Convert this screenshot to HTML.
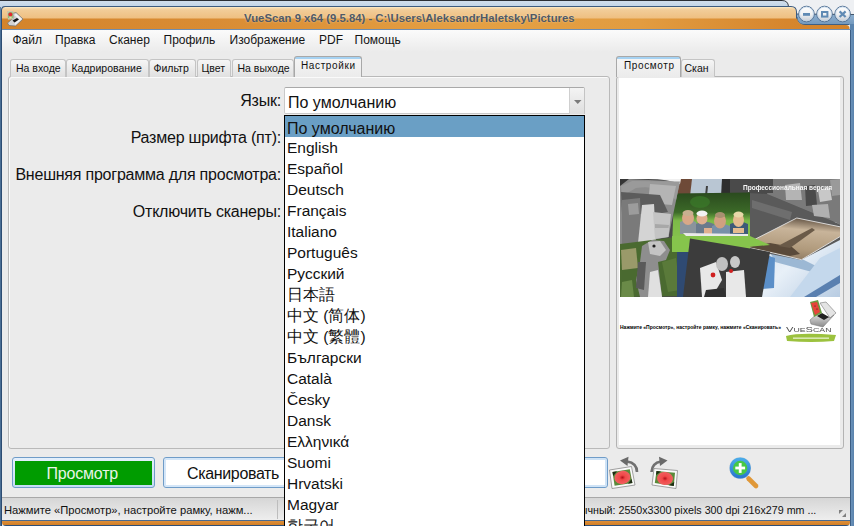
<!DOCTYPE html>
<html><head><meta charset="utf-8">
<style>
*{margin:0;padding:0;box-sizing:border-box}
html,body{width:854px;height:526px;overflow:hidden;background:#ebebeb;font-family:"Liberation Sans",sans-serif;color:#000}
.a{position:absolute}
.t{position:absolute;white-space:nowrap;line-height:1}
/* top background */
#topbg{left:0;top:0;width:854px;height:7px;background:linear-gradient(#c4d6e8,#a9c1da)}
#topdark{left:0;top:0;width:788px;height:1px;background:#2a2e33}
#bgwin{left:788px;top:0;width:66px;height:7px;background:#eef0f2}
/* window frame */
#frameL{left:0;top:30px;width:2px;height:496px;background:linear-gradient(90deg,#4a6e94 0,#4a6e94 1px,#2c4c72 1px)}
#frameR{left:850px;top:30px;width:4px;height:496px;background:linear-gradient(90deg,#3c5e84 0,#3c5e84 1px,#6a92ba 1px,#5a82ac)}
#title{left:1px;top:6px;width:796px;height:24px;border-radius:6px 0 0 0;border-top:1px solid #4c6a8e;border-left:1px solid #4c6a8e;
 background:linear-gradient(#f0c48a 0%,#e8ac62 45%,#d7842b 50%,#d88a34 100%)}
#titleB{left:790px;top:19px;width:60px;height:11px;background:linear-gradient(#d7842b,#d88a34)}
#btnarea{left:797px;top:7px;width:57px;height:13px;background:linear-gradient(#8eb0d0,#6a92ba)}
#client{left:2px;top:30px;width:848px;height:490px;background:#ebebeb}
#menubar{left:2px;top:30px;width:848px;height:22px;background:linear-gradient(#fbfbfb,#ebebeb)}
.menu{top:34px;font-size:12px;color:#141414}
/* tabs */
.tab{position:absolute;top:59px;height:18px;border:1px solid #c4c4c4;border-bottom:none;border-radius:3px 3px 0 0;background:linear-gradient(#f6f6f6,#e0e0e0)}
.tab span{position:absolute;top:2.5px;font-size:10.5px;line-height:1;white-space:nowrap;color:#111}
.tabsel{position:absolute;top:56px;height:21px;border:1px solid #a8a8a8;border-bottom:none;border-radius:3px 3px 0 0;background:linear-gradient(#a6d2f2 0,#a6d2f2 2px,#f4f4f4 2px,#ebebeb)}
.tabsel span{position:absolute;top:3.5px;font-size:10px;letter-spacing:0.62px;line-height:1;white-space:nowrap;color:#111}
#panel{left:8px;top:76px;width:602px;height:373px;border:1px solid #b9b9b9;border-radius:3px;background:#ebebeb;box-shadow:inset 1px 1px 0 #fafafa}
.lbl{font-size:16px;color:#111;letter-spacing:-0.22px}
#combo{left:284px;top:87px;width:301px;height:27px;border:1px solid #c9c9c9;border-top-color:#a9a9a9;border-radius:2px;background:#fff}
#cbtn{left:569px;top:88px;width:16px;height:26px;border-left:1px solid #cfcfcf;border-right:1px solid #c4c4c4;background:linear-gradient(#f4f4f4,#dedede)}
#list{left:284px;top:115px;width:301px;height:420px;border:1px solid #000;background:#fff}
#hl{left:285px;top:116px;width:299px;height:21px;background:#6a9fc5}
.it{left:287px;font-size:15.5px;color:#111}
/* preview */
#pvpanel{left:616px;top:76px;width:228px;height:373px;border:1px solid #b3b3b3;border-radius:3px;background:#ebebeb}
#pvwhite{left:619px;top:78px;width:221px;height:367px;background:#fff}
/* bottom */
#bprev{left:12px;top:457px;width:143px;height:31px;border:1px solid #6f9cc8;border-radius:3px;background:linear-gradient(#e4f0fc,#c4dcf4)}
#bprevin{left:15px;top:461px;width:137px;height:24px;background:#009c00}
#bscan{left:163px;top:457px;width:143px;height:31px;border:1px solid #6f9cc8;border-radius:3px;background:#fff;box-shadow:inset 0 0 0 2px #d4e6f8}
#input{left:500px;top:457px;width:108px;height:31px;border:1px solid #6f9cc8;border-radius:3px;background:#fff;box-shadow:inset 0 0 0 2px #cfe3f6}
#status{left:2px;top:497px;width:848px;height:23px;border-top:1px solid #a8a8a8;background:linear-gradient(#d6d6d6,#eeeeee)}
#bottom{left:2px;top:520px;width:848px;height:6px;border-radius:0 0 4px 4px;background:linear-gradient(#4a6b90 0,#4a6b90 1px,#dc8e38 1px,#d27f26 5px,#2f4f76 5px)}
.st{top:505px;font-size:11.2px;color:#111}
</style></head><body>
<div id="client" class="a"></div>
<svg class="a" style="left:0;top:0" width="854" height="32" viewBox="0 0 854 32">
<defs>
<linearGradient id="gTop" x1="0" y1="0" x2="0" y2="1"><stop offset="0" stop-color="#d2e0ee"/><stop offset="1" stop-color="#c2d4e6"/></linearGradient>
<linearGradient id="gOr1" x1="0" y1="0" x2="0" y2="1"><stop offset="0" stop-color="#f8e2bc"/><stop offset="0.12" stop-color="#f2cc98"/><stop offset="1" stop-color="#e8aa5a"/></linearGradient>
<linearGradient id="gOr2" gradientUnits="userSpaceOnUse" x1="0" y1="0" x2="854" y2="0"><stop offset="0" stop-color="#d4842b"/><stop offset="0.25" stop-color="#d98c34"/><stop offset="0.55" stop-color="#e4a044"/><stop offset="0.75" stop-color="#e29c40"/><stop offset="0.92" stop-color="#d6862e"/><stop offset="1" stop-color="#d4842b"/></linearGradient>
<linearGradient id="gBlue" x1="0" y1="0" x2="0" y2="1"><stop offset="0" stop-color="#8eb0d0"/><stop offset="1" stop-color="#5f88b2"/></linearGradient>
<linearGradient id="gBtn" x1="0" y1="0" x2="0" y2="1"><stop offset="0" stop-color="#ffffff"/><stop offset="0.5" stop-color="#f0f2f4"/><stop offset="1" stop-color="#c4cad2"/></linearGradient>
</defs>
<rect x="0" y="0" width="854" height="7" fill="url(#gTop)"/>
<rect x="0" y="0" width="782" height="1" fill="#2b2f35"/>
<path d="M782,0 Q788,0 788.5,6 L788.5,7 L854,7 L854,0 Z" fill="#eef0f3"/>
<path d="M782,0.5 Q788,0.5 788.5,6.5" fill="none" stroke="#3a3f46" stroke-width="1"/>
<rect x="788" y="7" width="66" height="8" fill="#eef0f3"/>
<!-- blue button band -->
<path d="M795,14 L854,14 L854,32 L850,32 L850,25 L803,25 Q797,23 797,17 Z" fill="url(#gBlue)"/>
<path d="M797,17 Q797,23.5 803,24.5 L849,24.5" fill="none" stroke="#3e5f84" stroke-width="1"/>
<!-- orange light -->
<path d="M1,32 L1,10 Q1,6 5,6 L791,6 Q797,6 797,12 L797,19 L1,19 Z" fill="#3c5b80"/><path d="M2,32 L2,10.5 Q2,7 5.5,7 L791,7 Q796,7 796,12 L796,19 L2,19 Z" fill="url(#gOr1)"/>

<rect x="5" y="7" width="786" height="1" fill="#fae6c0" opacity="0.8"/>
<!-- orange dark band -->
<path d="M2,18.5 L797,18.5 Q798,25 805,25 L846,25 Q849.5,25 849.5,28.5 L849.5,29 L2,29 Z" fill="url(#gOr2)"/>
<rect x="2" y="29" width="848" height="1" fill="#6f8db0"/>
<!-- frame -->
<rect x="0" y="7" width="1" height="25" fill="#5a82aa"/>
<rect x="1" y="10" width="1" height="22" fill="#2f4f76"/>
<rect x="850" y="24" width="4" height="8" fill="#5a84ae"/>
<!-- connector -->
<path d="M797,14 L854,14.5" stroke="#3a4a5c" stroke-width="0.9"/>
<g stroke="#4a6a8e" stroke-width="0.9">
<circle cx="806.5" cy="14" r="7.8" fill="url(#gBtn)"/>
<circle cx="824.5" cy="14" r="7.8" fill="url(#gBtn)"/>
<circle cx="842.6" cy="14" r="7.8" fill="url(#gBtn)"/>
</g>
<g stroke="#b8d0e8" stroke-width="0.8" fill="none" opacity="0.8">
<circle cx="806.5" cy="14" r="6.9"/>
<circle cx="824.5" cy="14" r="6.9"/>
<circle cx="842.6" cy="14" r="6.9"/>
</g>
<rect x="803" y="13" width="7" height="2.8" fill="#5f8ab4"/>
<rect x="822" y="12" width="5.4" height="4.6" fill="none" stroke="#5f8ab4" stroke-width="2"/>
<path d="M839.6,11.4 L845.6,17 M845.6,11.4 L839.6,17" stroke="#5f8ab4" stroke-width="2.2"/>
<!-- app icon -->
<path d="M7.5,23 L14,17.5 L12.5,13.5 L16,12.5 L23,19 L15.5,26 L9,25.5 Z" fill="#d4d4d4" stroke="#6e6e6e" stroke-width="0.7"/>
<path d="M16,13.5 L22,19 L15.5,25 L14.5,23 L19,19 L14.5,15 Z" fill="#f2f2f2"/>
<path d="M12.5,20.5 L17,18 L19,19.5 L14.5,22.5 Z" fill="#151515"/>
<path d="M7.5,11.5 L13,11.5 L13.5,19 L8,19.5 Z" fill="#f4f4ec" stroke="#9a9a9a" stroke-width="0.4"/>
<rect x="8.3" y="12.3" width="4.4" height="6.2" fill="#6aa84a"/>
<circle cx="10.4" cy="14.6" r="2" fill="#e42a2e"/>
<path d="M9,16.5 L12,16.5 L11.5,18.5 L9.5,18.5 Z" fill="#e8d8b0"/>
</svg>
<div class="t" style="left:244px;top:13px;font-size:11.35px;font-weight:bold;color:#4f5966;text-shadow:0 0 2px rgba(255,240,210,0.6)">VueScan 9 x64 (9.5.84) - C:\Users\AleksandrHaletsky\Pictures</div>

<div id="menubar" class="a"></div>
<div id="frameL" class="a"></div>
<div id="frameR" class="a"></div>
<div class="t menu" style="left:12.5px">Файл</div>
<div class="t menu" style="left:55px">Правка</div>
<div class="t menu" style="left:109px">Сканер</div>
<div class="t menu" style="left:163.5px">Профиль</div>
<div class="t menu" style="left:229.5px">Изображение</div>
<div class="t menu" style="left:319px">PDF</div>
<div class="t menu" style="left:354.5px">Помощь</div>

<div id="panel" class="a"></div>
<div class="tab" style="left:10px;width:56px"><span style="left:5px">На входе</span></div>
<div class="tab" style="left:66px;width:83px"><span style="left:4.5px">Кадрирование</span></div>
<div class="tab" style="left:149px;width:47px"><span style="left:3.5px">Фильтр</span></div>
<div class="tab" style="left:197px;width:34px"><span style="left:3.5px">Цвет</span></div>
<div class="tab" style="left:232px;width:62px"><span style="left:4.5px">На выходе</span></div>
<div class="tabsel" style="left:294px;width:68px"><span style="left:6px">Настройки</span></div>

<div class="t lbl" style="right:573px;top:93px">Язык:</div>
<div class="t lbl" style="right:573px;top:130px">Размер шрифта (пт):</div>
<div class="t lbl" style="right:573px;top:167px">Внешняя программа для просмотра:</div>
<div class="t lbl" style="right:573px;top:204px">Отключить сканеры:</div>

<div id="pvpanel" class="a"></div>
<div id="pvwhite" class="a"></div>
<svg class="a" style="left:620px;top:179px;filter:blur(0.35px)" width="220" height="118" viewBox="620 179 220 118">
<defs>
<linearGradient id="cBW" x1="0" y1="0" x2="1" y2="0.3"><stop offset="0" stop-color="#5a5a5a"/><stop offset="0.45" stop-color="#8a8a8a"/><stop offset="1" stop-color="#b8b8b8"/></linearGradient>
<linearGradient id="cGreen" x1="0" y1="0" x2="0" y2="1"><stop offset="0" stop-color="#2a4a1e"/><stop offset="0.35" stop-color="#3c6a28"/><stop offset="0.5" stop-color="#7cba48"/><stop offset="1" stop-color="#8cc850"/></linearGradient>
<linearGradient id="cSep" x1="0.5" y1="0" x2="0.3" y2="1"><stop offset="0" stop-color="#6a5a4a"/><stop offset="0.25" stop-color="#c8b49a"/><stop offset="0.7" stop-color="#b09a7c"/><stop offset="1" stop-color="#8a7660"/></linearGradient>
<linearGradient id="cScan" x1="0" y1="0" x2="1" y2="1"><stop offset="0" stop-color="#c8d8ea"/><stop offset="0.5" stop-color="#e8f0f8"/><stop offset="1" stop-color="#b8cce2"/></linearGradient>
<linearGradient id="cTopBW" x1="0" y1="0" x2="1" y2="1"><stop offset="0" stop-color="#9a9a9a"/><stop offset="0.5" stop-color="#6a6a6a"/><stop offset="1" stop-color="#a0a0a0"/></linearGradient>
</defs>
<rect x="620" y="179" width="220" height="118" fill="#4a4a4a"/>
<!-- scanner bottom right -->
<path d="M755,245 L840,220 L840,297 L755,297 Z" fill="url(#cScan)"/>
<path d="M771,254 L800,258 L820,268 L812,272 L775,262 Z" fill="#9cb8d4"/>
<path d="M820,258 L840,248 L840,275 L806,296 L800,297 L790,297 Z" fill="#c4d8ec"/>
<path d="M804,297 L840,275 L840,283 L816,297 Z" fill="#5a80b0"/>
<path d="M764,254 L775,258 L774,288 L762,289 Z" fill="#5b8fc8"/>
<!-- gray SNAP book -->
<path d="M749,193 L767,194 L837,223 L840,224 L840,240 L801,260 L749,250 Z" fill="#5a5a5a"/>
<path d="M752,200 L792,212 L790,220 L752,208 Z" fill="#6e6e6e"/>
<!-- top right BW group photo -->
<path d="M772,179 L840,179 L840,225 L837,223 L767,194 Z" fill="#7a7a7a"/>
<path d="M785,185 L800,183 L802,200 L786,200 Z" fill="#b4b4b4"/>
<path d="M805,186 L815,185 L817,205 L806,206 Z" fill="#4a4a4a"/>
<path d="M818,190 L830,188 L832,200 L820,202 Z" fill="#c8c8c8"/>
<path d="M812,205 L828,204 L830,218 L814,216 Z" fill="#b0b0b0"/>
<path d="M830,180 L840,179 L840,195 L832,196 Z" fill="#9a9a9a"/>
<!-- sepia eiffel -->
<path d="M742.5,245.6 L796.8,218 L841,227 L841,236 L801.5,259.7 Z" fill="url(#cSep)" stroke="#e4e4e4" stroke-width="0.9"/>
<path d="M748,247 L770,243 L792,247 L800,254 L790,256 Z" fill="#5a4a3a"/>
<path d="M778,246 L812,228 L815,230 L790,248 Z" fill="#6a5a48"/>
<!-- top strip -->
<rect x="620" y="179" width="153" height="14" fill="#4a4a4a"/>
<!-- top middle building/sky photo -->
<path d="M676,179 L724,179 L722,196 L674,196 Z" fill="#b9c6d3"/>
<path d="M676,179 L692,179 L690,196 L674,196 Z" fill="#6e4a38"/>
<path d="M706,186 L708,186 L707,196 L705,196 Z" fill="#404040"/>
<path d="M722,179 L730,179 L730,196 L721,196 Z" fill="#2e2e2e"/>
<!-- green kids photo -->
<path d="M674,193.5 L750,192.5 L750,249 L672,248 Z" fill="url(#cGreen)"/>
<ellipse cx="700" cy="202" rx="10" ry="6" fill="#3a7a2a" opacity="0.7"/>
<path d="M680,222 Q688,218 696,222 L700,234 L680,234 Z" fill="#8a949c"/>
<path d="M696,224 Q704,219 714,224 L716,234 L696,234 Z" fill="#6a7a8c"/>
<path d="M712,226 Q720,221 730,226 L734,236 L712,236 Z" fill="#7890a8"/>
<path d="M730,224 Q740,219 748,224 L748,236 L730,236 Z" fill="#3e5a78"/>
<ellipse cx="688" cy="218" rx="6" ry="7" fill="#d8a888"/>
<ellipse cx="688" cy="213" rx="5.5" ry="3" fill="#c8b090"/>
<ellipse cx="702" cy="218.5" rx="5.5" ry="6" fill="#e0b090"/>
<ellipse cx="702" cy="213.5" rx="5.5" ry="3" fill="#f2f2f2"/>
<ellipse cx="720" cy="221" rx="6" ry="7.5" fill="#d0a080"/>
<ellipse cx="720" cy="215" rx="5" ry="3" fill="#a89070"/>
<ellipse cx="738.5" cy="220" rx="5.5" ry="7" fill="#e4bc90"/>
<ellipse cx="738.5" cy="214.5" rx="5" ry="3" fill="#e8d8a8"/>
<path d="M704,228 L712,228 L712,234 L704,234 Z" fill="#e0b090"/>
<path d="M733,228 L744,228 L744,233 L733,233 Z" fill="#e4bc90"/>
<path d="M683,233 L748,234 L748,237 L686,236 Z" fill="#eaeaea"/>
<!-- BW wedding photo -->
<path d="M628,179 L680,181.5 L668.5,237 L636,243 L620,246 L620,184 Z" fill="#8c8c8c"/>
<path d="M620,179 L629,179 L620,186 Z" fill="#363636"/>
<path d="M648,179 L681,179 L680,184 Q668,179 648,179 Z" fill="#f0f0f0"/>
<path d="M632,181 L680,181.5 L676,200 Q660,184 636,188 L622,196 L621,186 Z" fill="#9a9a9a"/>
<path d="M650,184 L676,186 L672,205 L648,203 Z" fill="#b4b4b4"/>
<path d="M621,192 L660,195 L668,212 L656,214 L622,214 Z" fill="#5c5c5c"/>
<path d="M622,200 L640,198 L642,243 L622,246 Z" fill="#7a7a7a"/>
<path d="M628,204 L638,203 L639,214 L629,215 Z" fill="#9c9c9c"/>
<path d="M642,205 L654,204 L656,240 L638,243 Z" fill="#d4d4d4"/>
<path d="M653,212 L671,214 L668.5,237 L655,239 Z" fill="#c4c4c4"/>
<path d="M655,224 L669,225 L668.5,228 L655,228 Z" fill="#a8a8a8"/>
<!-- dog photo -->
<path d="M620,244 L676,237 L683,296 L620,297 Z" fill="#4a6a30"/>
<path d="M621,250 L636,248 L638,268 L622,270 Z" fill="#9a9a6a"/>
<path d="M662,262 L676,258 L680,290 L668,292 Z" fill="#5a7a3a"/>
<path d="M622,282 L632,280 L634,297 L621,297 Z" fill="#6a8a48"/>
<path d="M642,246 L652,240 L664,241 L670,250 L666,260 L658,262 L662,297 L640,297 L636,280 L640,262 Z" fill="#8e8e8e"/>
<path d="M648,242 L660,241 L666,250 L660,256 L650,254 Z" fill="#c4c4c4"/>
<circle cx="654" cy="246" r="1.6" fill="#202020"/>
<path d="M650,272 L658,270 L662,297 L648,297 Z" fill="#e0e0e0"/>
<path d="M638,262 L646,262 L644,290 L636,288 Z" fill="#5a5a5a"/>
<!-- blue strip and kids bw photo -->
<path d="M677,251 L691,250 L684,297 L677,297 Z" fill="#2f4a72"/>
<path d="M672,236 L750,236 L770,245 L690,252 L672,252 Z" fill="#86c44c"/>
<path d="M690,238.5 L750,248.5 L770,252 L762,297 L683,297 Z" fill="#3c3c3c"/>
<path d="M700,268 L716,262 L722,280 L712,297 L702,297 Z" fill="#e8e8e8"/>
<ellipse cx="722" cy="264" rx="6" ry="7" fill="#c0c0c0"/>
<path d="M726,272 L744,270 L746,297 L726,297 Z" fill="#e8e8e8"/>
<ellipse cx="735" cy="262" rx="5" ry="6" fill="#c8c8c8"/>
<circle cx="713" cy="275" r="2.4" fill="#d02020"/>
<circle cx="731" cy="271" r="2" fill="#d02020"/>
<path d="M706,290 L724,288 L726,297 L704,297 Z" fill="#303030"/>
<!-- title text -->
<text x="743" y="190" font-family="Liberation Sans" font-size="6.8" fill="#f8f8f8" font-weight="bold" textLength="89" lengthAdjust="spacingAndGlyphs">Профессиональная версия</text>
</svg>
<svg class="a" style="left:780px;top:298px;filter:blur(0.25px)" width="60" height="48" viewBox="780 298 60 48">
<defs><linearGradient id="lgS" x1="0" y1="0" x2="0" y2="1"><stop offset="0" stop-color="#e8e8e8"/><stop offset="1" stop-color="#8a8a8a"/></linearGradient></defs>
<path d="M820,303 L826,302 L836,313 L830,318 Z" fill="#e4e4e4" stroke="#8a8a8a" stroke-width="0.7"/>
<path d="M810,320 L818,313 L830,318 L834,315 L823,327 L811,324 Z" fill="url(#lgS)" stroke="#7a7a7a" stroke-width="0.6"/>
<path d="M817,316 L822,313 L829,317 L824,320 Z" fill="#202020"/>
<path d="M810,302 L818,300 L822,313 L814,317 Z" fill="#6a9a40"/>
<path d="M811,303 L817,302 L820,312 L815,315 Z" fill="#e8443a"/>
<circle cx="815" cy="306" r="0.6" fill="#222"/><circle cx="817" cy="309" r="0.6" fill="#222"/>
<text x="786" y="332" font-family="Liberation Sans" font-size="7.4" fill="#4e4e4e" textLength="45.5" lengthAdjust="spacingAndGlyphs">V<tspan font-size="5.8">UE</tspan>S<tspan font-size="5.8">CAN</tspan></text>
<path d="M786,336 Q800,332 836,335 L834,341 Q812,343 787,341 Z" fill="#9cc23e"/>
<rect x="793" y="337.4" width="36" height="1.6" fill="#eef4d8" opacity="0.75"/>
</svg>
<div class="t" style="left:620px;top:325px;font-size:5px;color:#000;font-weight:bold;transform:scaleX(1);">Нажмите «Просмотр», настройте рамку, нажмите «Сканировать»</div>
<div class="tabsel" style="left:616px;width:65px"><span style="left:7px">Просмотр</span></div>
<div class="tab" style="left:681px;width:34px"><span style="left:2.5px">Скан</span></div>

<div id="bprev" class="a"></div>
<div id="bprevin" class="a"></div>
<div class="t" style="left:46.5px;top:466px;font-size:16px;letter-spacing:-0.2px;color:#e8f4e8">Просмотр</div>
<div id="bscan" class="a"></div>
<div class="t" style="left:187px;top:466px;font-size:16px;letter-spacing:-0.35px;color:#111">Сканировать</div>
<div id="input" class="a"></div>

<svg class="a" style="left:604px;top:452px" width="160" height="40" viewBox="604 452 160 40">
<defs>
<radialGradient id="gFl" cx="0.5" cy="0.5" r="0.5"><stop offset="0" stop-color="#b01018"/><stop offset="0.35" stop-color="#f04848"/><stop offset="1" stop-color="#f06060"/></radialGradient>
<linearGradient id="gRing" x1="0" y1="0" x2="0" y2="1"><stop offset="0" stop-color="#4aaae8"/><stop offset="1" stop-color="#2a78d0"/></linearGradient>
</defs>
<!-- left rotate -->
<path d="M609.5,470 L631.5,466.5 L635,485 L612,488.5 Z" fill="#fafafa" stroke="#8a8a8a" stroke-width="0.8"/>
<path d="M612.5,472 L629.8,469.2 L632.4,483 L614.6,485.8 Z" fill="#5a8a3a"/>
<path d="M612.5,472 L617,471.3 L613.2,476 Z M632.4,483 L628,483.7 L631.6,479 Z" fill="#1e2a14"/>
<ellipse cx="622.4" cy="477.5" rx="8" ry="6.6" fill="url(#gFl)" transform="rotate(-9 622.4 477.5)"/>
<path d="M637,472 Q637,463 627,461.5" fill="none" stroke="#707070" stroke-width="2.6"/>
<path d="M620,460.5 L628.5,456.8 L627.5,466 Z" fill="#6a6a6a"/>
<!-- right rotate -->
<path d="M654,468.5 L677.5,470.5 L676,488.5 L652,485 Z" fill="#fafafa" stroke="#8a8a8a" stroke-width="0.8"/>
<path d="M656.5,471 L675,472.8 L673.8,486 L654.8,483 Z" fill="#5a8a3a"/>
<path d="M656.5,471 L661,471.4 L656,475 Z M673.8,486 L669,485.3 L674.2,482 Z" fill="#1e2a14"/>
<ellipse cx="665" cy="478.5" rx="8" ry="6.6" fill="url(#gFl)" transform="rotate(6 665 478.5)"/>
<path d="M651.5,472 Q652,463 661,461.5" fill="none" stroke="#707070" stroke-width="2.6"/>
<path d="M667.5,460.5 L659,456.8 L660,466 Z" fill="#6a6a6a"/>
<!-- zoom -->
<path d="M748.5,478.5 L756,486" stroke="#e09838" stroke-width="4.6" stroke-linecap="round"/>
<circle cx="740.2" cy="468" r="9" fill="#46c846" stroke="url(#gRing)" stroke-width="3.6"/>
<circle cx="740.2" cy="468" r="11" fill="none" stroke="#fde9d8" stroke-width="0.6" opacity="0.6"/>
<rect x="735.3" y="466.6" width="9.8" height="2.8" fill="#fff"/>
<rect x="738.8" y="463.1" width="2.8" height="9.8" fill="#fff"/>
</svg>
<div id="status" class="a"></div>
<div class="t st" style="left:4px">Нажмите «Просмотр», настройте рамку, нажм...</div>
<div class="a" style="left:277px;top:500px;width:1px;height:19px;background:#bdbdbd"></div>
<div class="t st" style="left:525px;font-size:10.7px;top:505px">Размер: обычный: 2550x3300 pixels 300 dpi 216x279 mm ...</div>
<div id="bottom" class="a"></div>
<svg class="a" style="left:838px;top:509px" width="10" height="10"><path d="M1,1 L5,1 L1,5 Z M8,4 L8,8 L4,8 Z" fill="#7f7f7f"/></svg>

<div id="combo" class="a"></div>
<div id="cbtn" class="a"></div>
<svg class="a" style="left:573px;top:99px" width="10" height="6"><path d="M1,1 L8.5,1 L4.75,5 Z" fill="#7a7a7a"/></svg>
<div class="t" style="left:288px;top:95px;font-size:16px;color:#111">По умолчанию</div>

<div id="list" class="a"></div>
<div id="hl" class="a"></div>
<div class="t it" style="top:121px;font-size:16px">По умолчанию</div>
<div class="t it" style="top:140px">English</div>
<div class="t it" style="top:161px">Español</div>
<div class="t it" style="top:182px">Deutsch</div>
<div class="t it" style="top:203px">Français</div>
<div class="t it" style="top:224px">Italiano</div>
<div class="t it" style="top:245px">Português</div>
<div class="t it" style="top:266px">Русский</div>
<div class="t it" style="top:287px">日本語</div>
<div class="t it" style="top:308px">中文 (简体)</div>
<div class="t it" style="top:329px">中文 (繁體)</div>
<div class="t it" style="top:350px">Български</div>
<div class="t it" style="top:371px">Català</div>
<div class="t it" style="top:392px">Česky</div>
<div class="t it" style="top:413px">Dansk</div>
<div class="t it" style="top:434px">Ελληνικά</div>
<div class="t it" style="top:455px">Suomi</div>
<div class="t it" style="top:476px">Hrvatski</div>
<div class="t it" style="top:497px">Magyar</div>
<div class="t it" style="top:518px">한국어</div>
</body></html>
